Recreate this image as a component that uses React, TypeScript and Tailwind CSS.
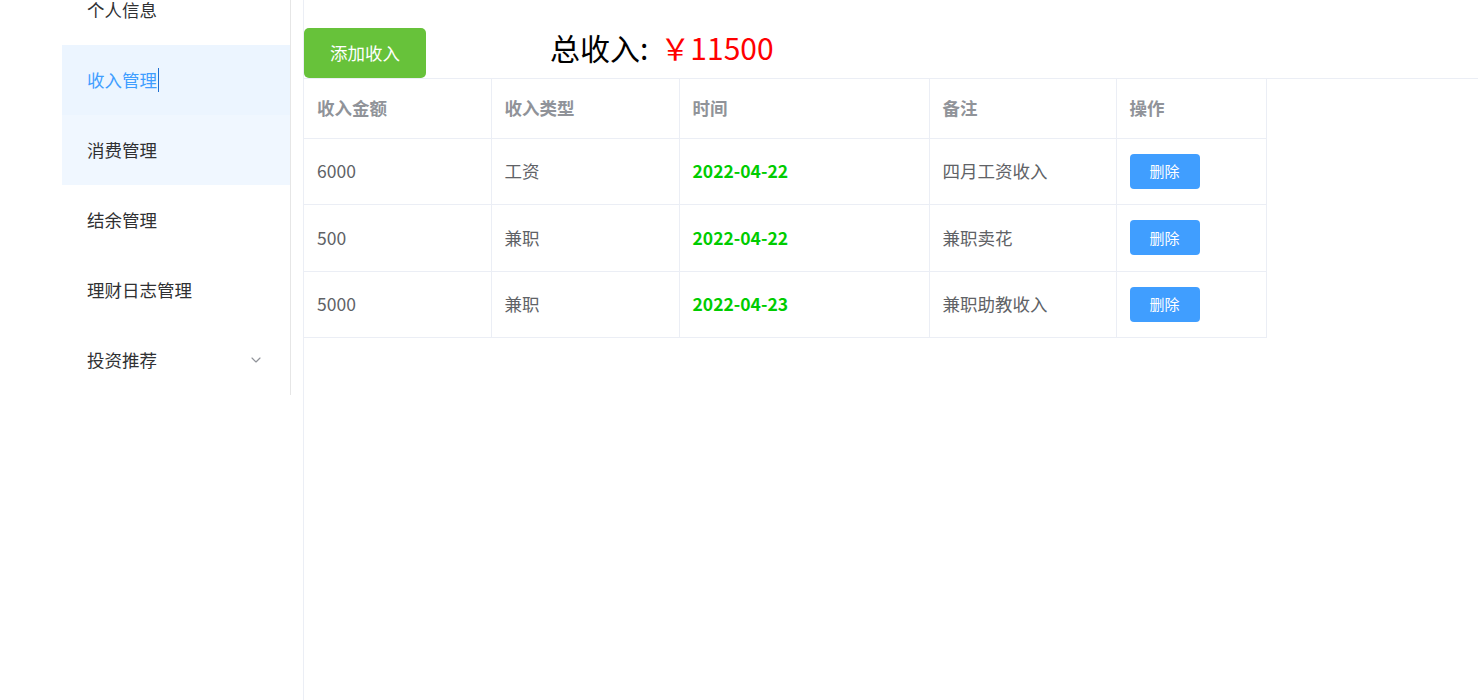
import { ChevronDown } from 'lucide-react'

const menu = [
  { label: '个人信息' },
  { label: '收入管理', active: true },
  { label: '消费管理', hover: true },
  { label: '结余管理' },
  { label: '理财日志管理' },
  { label: '投资推荐', sub: true },
]

const rows = [
  { amount: '6000', type: '工资', date: '2022-04-22', note: '四月工资收入' },
  { amount: '500', type: '兼职', date: '2022-04-22', note: '兼职卖花' },
  { amount: '5000', type: '兼职', date: '2022-04-23', note: '兼职助教收入' },
]

const cols = ['w-[187px]', 'w-[188px]', 'w-[250px]', 'w-[187px]', 'w-[150px]']
const headers = ['收入金额', '收入类型', '时间', '备注', '操作']

export default function App() {
  return (
    <div
      className="flex min-h-[700px] bg-white text-[#303133]"
      style={{ fontFamily: '"Noto Sans CJK SC", "Noto Sans", sans-serif' }}
    >
      {/* Sidebar */}
      <div className="w-[303px] shrink-0 overflow-hidden">
        <ul className="-mt-[25px] ml-[62px] w-[229px] border-r border-[#e6e6e6]">
          {menu.map((m) => (
            <li
              key={m.label}
              className={
                'flex h-[70px] items-center justify-between pl-[25px] pr-[26px] text-[17.5px] ' +
                (m.active
                  ? 'bg-[#ecf5ff] text-[#409eff]'
                  : m.hover
                  ? 'bg-[#f0f7ff] text-[#303133]'
                  : 'text-[#303133]')
              }
            >
              <span className="flex items-center">
                {m.label}
                {m.active && <span className="ml-px inline-block h-[24px] w-px bg-[#1f6fd1]" />}
              </span>
              {m.sub && <ChevronDown className="h-[16px] w-[16px] text-[#909399]" strokeWidth={1.75} />}
            </li>
          ))}
        </ul>
      </div>

      {/* Main */}
      <div className="flex-1 border-l border-[#ebeef5]">
        <div className="flex items-center pt-[28px]">
          <button className="h-[50px] w-[122px] rounded-[5px] bg-[#67c23a] text-[17.5px] text-white">
            添加收入
          </button>
          <h2 className="ml-[124px] -mt-[12px] text-[30px] leading-[36px] text-black">
            总收入:<span className="ml-[12px] text-[#ff0000]">￥11500</span>
          </h2>
        </div>

        <div className="border-t border-[#ebeef5]">
          <table className="border-collapse text-[17.5px]">
            <thead>
              <tr>
                {headers.map((h, i) => (
                  <th
                    key={h}
                    className={
                      cols[i] +
                      ' h-[59px] border-b border-r border-[#ebeef5] px-[13px] text-left font-bold text-[#909399]'
                    }
                  >
                    {h}
                  </th>
                ))}
              </tr>
            </thead>
            <tbody>
              {rows.map((r, idx) => (
                <tr key={idx} className="h-[66.5px]">
                  <td className="border-b border-r border-[#ebeef5] px-[13px] text-[#606266]">{r.amount}</td>
                  <td className="border-b border-r border-[#ebeef5] px-[13px] text-[#606266]">{r.type}</td>
                  <td className="border-b border-r border-[#ebeef5] px-[13px] font-bold text-[#00cc00]">{r.date}</td>
                  <td className="border-b border-r border-[#ebeef5] px-[13px] text-[#606266]">{r.note}</td>
                  <td className="border-b border-r border-[#ebeef5] px-[13px]">
                    <button className="h-[35px] w-[70px] rounded-[4px] bg-[#409eff] text-[15px] text-white">
                      删除
                    </button>
                  </td>
                </tr>
              ))}
            </tbody>
          </table>
        </div>
      </div>
    </div>
  )
}
